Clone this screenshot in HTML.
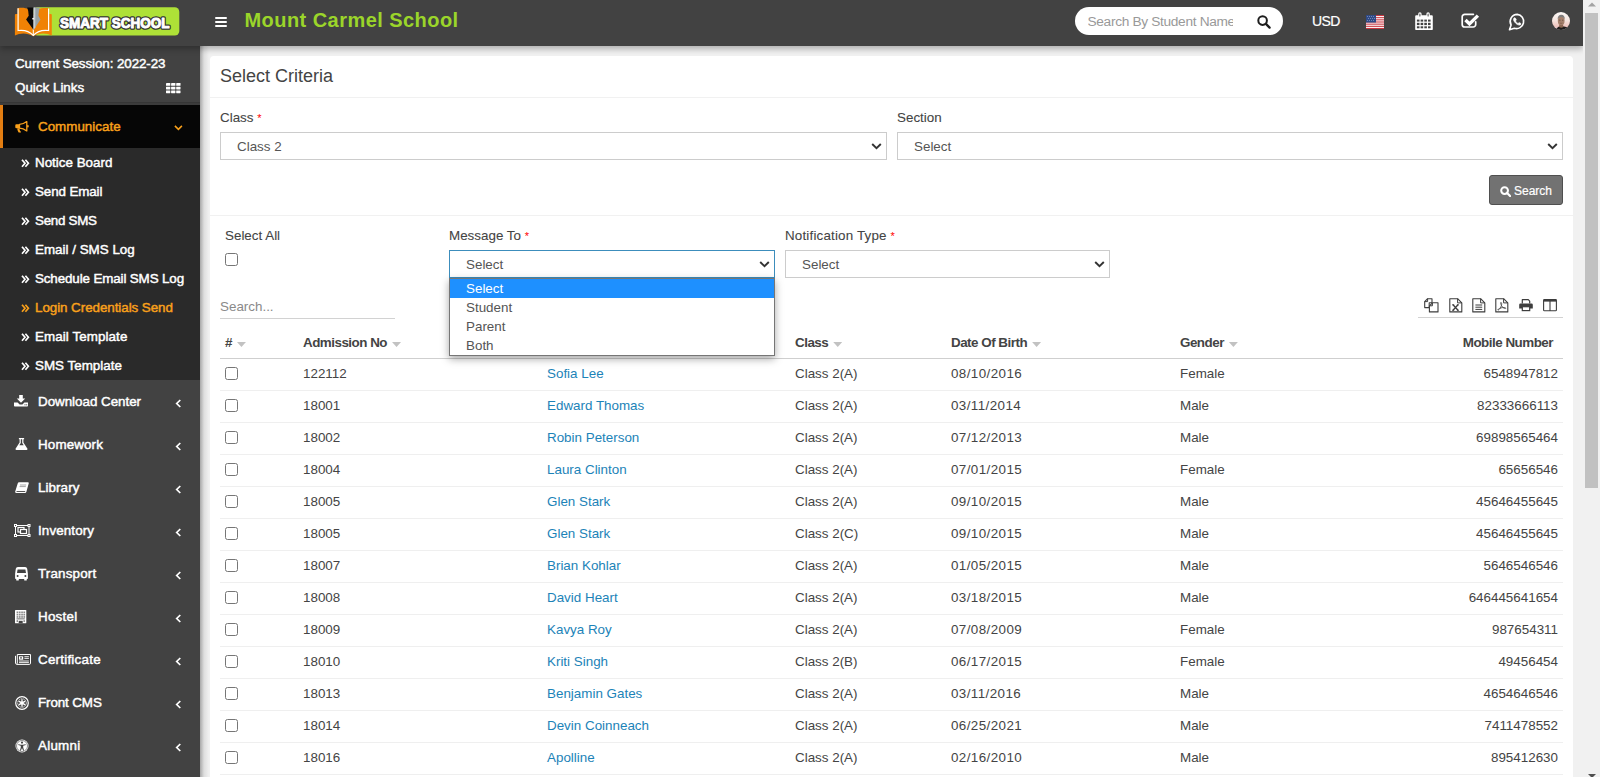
<!DOCTYPE html>
<html lang="en">
<head>
<meta charset="utf-8">
<title>Smart School : Login Credentials Send</title>
<style>
*{box-sizing:border-box;margin:0;padding:0}
html,body{width:1600px;height:777px;overflow:hidden}
body{font-family:"Liberation Sans",Arial,sans-serif;font-size:13.33px;color:#444;background:#f1f1f1;position:relative}
.abs{position:absolute}
svg{display:block}
/* ---------- top navbar ---------- */
#nav{position:absolute;left:0;top:0;width:1583px;height:46px;background:#424242;z-index:30;box-shadow:0 3px 6px rgba(0,0,0,.28)}
#logo{position:absolute;left:14px;top:5.5px}
#burger{position:absolute;left:214.500px;top:17.300px;width:12.500px;height:11px}
#burger i{display:block;height:2px;background:#fff;margin-bottom:2px;border-radius:1px}
#school{position:absolute;left:244.500px;top:8px;font-size:20px;font-weight:bold;color:#9bd52a;letter-spacing:.45px;line-height:24px;white-space:nowrap}
#searchpill{position:absolute;left:1075px;top:7px;width:208px;height:28px;border-radius:14px;background:#fff}
#searchpill span{position:absolute;left:12.500px;top:0;line-height:29px;font-size:13.700px;letter-spacing:-.32px;color:#999;width:145.500px;overflow:hidden;white-space:nowrap}
#usd{position:absolute;left:1312px;top:11px;color:#fff;font-size:14px;letter-spacing:-.6px;line-height:20px;-webkit-text-stroke:.2px #fff}
/* ---------- sidebar ---------- */
#side{position:absolute;left:0;top:46px;width:200px;height:731px;background:#424242;z-index:20;color:#fff}
#side .t{position:absolute;left:15px;font-size:13.4px;line-height:20px;white-space:nowrap;-webkit-text-stroke:.45px currentColor}
#comm{position:absolute;left:0;top:59px;width:200px;height:43px;background:#060606;border-left:3px solid #e27d12}
#sub{position:absolute;left:0;top:102px;width:200px;height:232px;background:#2a2a2a;border-left:3px solid #2a2a2a}
.sub{position:absolute;left:35px;font-size:13.4px;line-height:20px;white-space:nowrap;-webkit-text-stroke:.45px currentColor}
.main{position:absolute;left:38px;font-size:13.4px;line-height:20px;white-space:nowrap;-webkit-text-stroke:.45px currentColor}
.or{color:#f9a01b}
/* ---------- content ---------- */
#shl{position:absolute;left:200px;top:46px;width:9px;height:731px;background:linear-gradient(to right,rgba(0,0,0,.30),rgba(0,0,0,.08) 45%,rgba(0,0,0,0));z-index:5}
#box{position:absolute;left:210px;top:56px;width:1363px;height:740px;background:#fff;border-radius:4px 4px 0 0}
.lbl{position:absolute;font-size:13.4px;line-height:20px;color:#444;white-space:nowrap;-webkit-text-stroke:.08px currentColor}
.req{color:#f00;font-size:11px;-webkit-text-stroke:0}
.sel{position:absolute;height:28px;border:1px solid #ccc;background:#fff;font-size:13.4px;color:#555;line-height:27px;padding-left:16px;white-space:nowrap;border-radius:0}
.sel svg{position:absolute;right:4px;top:10px}
.hr{position:absolute;height:1px;background:#f1f1f1}
table{position:absolute;left:220px;top:326px;width:1343px;border-collapse:separate;border-spacing:0;table-layout:fixed}
th{height:33px;text-align:left;font-weight:bold;font-size:13.4px;letter-spacing:-.5px;color:#444;padding:0 5px;border-bottom:1px solid #cfcfcf;white-space:nowrap;line-height:30px;vertical-align:middle;padding-top:2px}
td{height:32px;font-size:13.4px;color:#444;padding:0 5px;border-bottom:1px solid #efefef;white-space:nowrap;line-height:29px;vertical-align:middle;padding-bottom:2px}
td a{color:#1c83b8;text-decoration:none}
.r{text-align:right}
td.d{letter-spacing:.42px}
.cb{display:block;width:13px;height:13px;border:1px solid #767676;border-radius:2.5px;background:#fff}
.car{display:inline-block;width:9px;height:5px;margin-left:5px;vertical-align:0;background:#c2c2c2;clip-path:polygon(0 0,100% 0,50% 100%)}
#sbtn{position:absolute;left:1489px;top:175px;width:74px;height:30px;background:#727272;border:1px solid #4f4f4f;border-radius:3px;color:#fff;font-size:12px;line-height:30px;white-space:nowrap}
#sbtn svg{position:absolute;left:10px;top:9.700px}
#sbtn span{position:absolute;left:24px;top:0;-webkit-text-stroke:.2px #fff}
/* dropdown */
#dd{position:absolute;left:449px;top:278px;width:326px;height:78px;background:#fff;border:1px solid #767676;box-shadow:0 3px 8px rgba(0,0,0,.35);z-index:10}
#dd div{height:19px;line-height:19px;font-size:13.4px;padding-left:16px;color:#555}
#dd div.on{background:#1e90ff;color:#fff}
/* scrollbar */
#sb{position:absolute;left:1583px;top:0;width:17px;height:777px;background:#f1f1f1;z-index:40}
#sb b{position:absolute;left:2px;top:13px;width:13px;height:475px;background:#c1c1c1}
</style>
</head>
<body>

<!-- NAVBAR -->
<div id="nav">
  <svg id="logo" width="168" height="31" viewBox="0 0 168 31">
    <rect x="19" y="1.200" width="146.300" height="28.400" rx="4.500" fill="#aee137"/>
    <path d="M.9 8.900Q.9 8 1.800 8L3.500 8L3.500 2.200C8 1.500 12 1.900 14.500 3.400L19.300 8L19.300 30.200C13 26.300 6 26.900.9 29.400Z" fill="#f08205"/>
    <path d="M37.800 8.900Q37.800 8 36.900 8L35.200 8L35.200 2.400C31 1.700 27 2.100 24.500 3.500L19.300 8L19.300 30.200C25.600 26.300 32.600 26.900 37.800 29.400Z" fill="#f08205"/>
    <path d="M4.100 2.300L4.100 24.500C10 23.700 15.500 25.300 19.300 29.400C23.100 25.300 28.600 23.700 34.600 24.500L34.600 2.500" fill="none" stroke="#fff" stroke-width="1.200"/>
    <path d="M19.300 9L19.300 29.600" stroke="#fff" stroke-width="1"/>
    <path d="M13.200 1.500L19.600 1.500L19.600 23.900L12.100 13.600L14.700 9.800L14.200 5Z" fill="#0a0a0a"/>
    <path d="M19.600 1.500L25.800 1.500L25 5L24.400 9.800L26.500 13.600L19.600 23.900Z" fill="#98a2a5"/>
    <path d="M19.600 1.500L21.300 1.500L21.300 21.300L19.600 23.900Z" fill="#c9d0d2"/>
    <circle cx="19.100" cy="12.700" r="0.900" fill="#fff"/>
    <text x="100.700" y="21.500" text-anchor="middle" font-family="'Liberation Sans',Arial,sans-serif" font-weight="bold" font-size="14.800" textLength="109.500" lengthAdjust="spacingAndGlyphs" fill="#333" stroke="#333" stroke-width="3.600" stroke-linejoin="round">SMART SCHOOL</text>
    <text x="100.700" y="21.500" text-anchor="middle" font-family="'Liberation Sans',Arial,sans-serif" font-weight="bold" font-size="14.800" textLength="109.500" lengthAdjust="spacingAndGlyphs" fill="#fff" stroke="#fff" stroke-width="1" stroke-linejoin="round">SMART SCHOOL</text>
  </svg>
  <div id="burger"><i></i><i></i><i></i></div>
  <div id="school">Mount Carmel School</div>
  <div id="searchpill"><span>Search By Student Name Or Roll</span></div>
  <svg class="abs" style="left:1257px;top:15px" width="14" height="14" viewBox="0 0 14 14"><circle cx="5.6" cy="5.6" r="4.3" fill="none" stroke="#1d1d1d" stroke-width="2"/><path d="M8.9 8.9L12.6 12.6" stroke="#1d1d1d" stroke-width="2.3" stroke-linecap="round"/></svg>
  <div id="usd">USD</div>
  <!-- flag -->
  <svg class="abs" style="left:1366px;top:15px" width="18" height="14" viewBox="0 0 18 14"><rect width="18" height="14" fill="#fff"/><g fill="#c9353f"><rect y="0" width="18" height="1.08"/><rect y="2.15" width="18" height="1.08"/><rect y="4.3" width="18" height="1.08"/><rect y="6.46" width="18" height="1.08"/><rect y="8.6" width="18" height="1.08"/><rect y="10.77" width="18" height="1.08"/><rect y="12.92" width="18" height="1.08"/></g><rect width="10" height="7.54" fill="#2f4a85"/><g fill="#7386b5"><rect x="1" y="1" width="1" height="1"/><rect x="3" y="1" width="1" height="1"/><rect x="5" y="1" width="1" height="1"/><rect x="7" y="1" width="1" height="1"/><rect x="2" y="3" width="1" height="1"/><rect x="4" y="3" width="1" height="1"/><rect x="6" y="3" width="1" height="1"/><rect x="8" y="3" width="1" height="1"/><rect x="1" y="5" width="1" height="1"/><rect x="3" y="5" width="1" height="1"/><rect x="5" y="5" width="1" height="1"/><rect x="7" y="5" width="1" height="1"/></g></svg>
  <!-- calendar -->
  <svg class="abs" style="left:1415px;top:11.5px" width="18" height="18.5" viewBox="0 0 18 18.5"><path d="M1.2 3.2h15.6a1 1 0 0 1 1 1V17a1.2 1.2 0 0 1-1.2 1.2H1.4A1.2 1.2 0 0 1 .2 17V4.2a1 1 0 0 1 1-1z" fill="#fff"/><rect x="3.2" y="0.3" width="3.4" height="5.2" rx="1.7" fill="#fff"/><rect x="11.4" y="0.3" width="3.4" height="5.2" rx="1.7" fill="#fff"/><rect x="4.4" y="1.4" width="1" height="3" rx=".5" fill="#424242"/><rect x="12.6" y="1.4" width="1" height="3" rx=".5" fill="#424242"/><g fill="#424242"><rect x="1.9" y="7.6" width="2.6" height="2"/><rect x="5.6" y="7.6" width="2.6" height="2"/><rect x="9.3" y="7.6" width="2.6" height="2"/><rect x="13" y="7.6" width="2.6" height="2"/><rect x="1.9" y="10.8" width="2.6" height="2.3"/><rect x="5.6" y="10.8" width="2.6" height="2.3"/><rect x="9.3" y="10.8" width="2.6" height="2.3"/><rect x="13" y="10.8" width="2.6" height="2.3"/><rect x="1.9" y="14.3" width="2.6" height="2"/><rect x="5.6" y="14.3" width="2.6" height="2"/><rect x="9.3" y="14.3" width="2.6" height="2"/><rect x="13" y="14.3" width="2.6" height="2"/></g></svg>
  <!-- check-square -->
  <svg class="abs" style="left:1461px;top:13px" width="19" height="16" viewBox="0 0 19 16"><path d="M12.400 1.300H3.700a2.500 2.500 0 0 0-2.500 2.500V11.500A2.500 2.500 0 0 0 3.700 14H12.200A2.500 2.500 0 0 0 14.700 11.500V8.800" fill="none" stroke="#fff" stroke-width="1.700" stroke-linecap="round"/><path d="M4.500 7L8.500 11L16.900 2.600" fill="none" stroke="#fff" stroke-width="3.300" stroke-linejoin="miter"/></svg>
  <!-- whatsapp -->
  <svg class="abs" style="left:1507.500px;top:12.500px" width="18" height="18" viewBox="0 0 18 18"><path d="M9.300 1.400A7.100 7.100 0 0 0 3.100 12L1.500 16.700L6.300 15.200A7.100 7.100 0 1 0 9.300 1.400Z" fill="none" stroke="#fff" stroke-width="1.600" stroke-linejoin="round"/><path d="M6.900 4.800c-.5-.3-1.300.5-1.400 1.300c-.2 2.300 3.300 6.100 6 6c.9 0 1.700-.8 1.500-1.400c-.2-.4-1.300-1-1.800-1.100c-.5 0-.7.800-1.100.8c-.8-.1-2.300-1.600-2.500-2.500c0-.4.700-.7.700-1.200c-.1-.5-.7-1.600-1.400-1.900z" fill="#fff" stroke="#fff" stroke-width=".6" stroke-linejoin="round"/></svg>
  <!-- avatar -->
  <svg class="abs" style="left:1552px;top:12px" width="18" height="18" viewBox="0 0 18 18"><linearGradient id="avg" x1="0" y1="0" x2="0" y2="1"><stop offset="0" stop-color="#fbf8f6"/><stop offset=".45" stop-color="#f6e6e0"/><stop offset=".8" stop-color="#efc3bd"/><stop offset="1" stop-color="#c9c6d8"/></linearGradient><clipPath id="avc"><circle cx="9" cy="9" r="9"/></clipPath><g clip-path="url(#avc)"><rect width="18" height="18" fill="url(#avg)"/><path d="M4.500 18c.2-2.300 1.800-3.500 4.300-3.900l4.500.6c2 .5 3.300 1.600 3.700 3.300z" fill="#1f1c1a"/><path d="M7.300 12.500h3.700l.4 2.600c-1.400.8-3 .7-4.300-.2z" fill="#8a6450"/><ellipse cx="9.200" cy="8.700" rx="3.400" ry="4.500" fill="#a47f6b"/><path d="M5.700 7.600c-.3-3.200 1.400-4.900 3.600-4.900s3.800 1.600 3.400 4.800c-.5-1.500-1.300-2.400-3.500-2.400s-3 .9-3.500 2.500z" fill="#7f7d7c"/><path d="M7.200 8.200h1.300M10 8.200h1.300" stroke="#5c4438" stroke-width=".7"/><path d="M8 11.100c.8.400 1.600.4 2.400 0" stroke="#7a5646" stroke-width=".6" fill="none"/></g></svg>
</div>

<!-- SIDEBAR -->
<div id="side">
  <div class="t" style="top:8px;letter-spacing:-.09px">Current Session: 2022-23</div>
  <div class="t" style="top:32px">Quick Links</div>
  <div class="abs" style="left:0;top:56px;width:200px;height:1px;background:#363636"></div><div class="abs" style="left:0;top:57px;width:200px;height:2px;background:#3c3c3c"></div>
  <div id="comm"><svg class="abs" style="left:11.500px;top:15.800px" width="15" height="12" viewBox="0 0 15 12"><path d="M.3 4.300a1 1 0 0 1 1-1h3.200v3.900H1.300a1 1 0 0 1-1-1z" fill="#f9a01b"/><path d="M4.500 3.300C7.500 3.300 10 2 11.800.6V9.900C10 8.500 7.500 7.200 4.500 7.200z" fill="none" stroke="#f9a01b" stroke-width="1.300" stroke-linejoin="round"/><rect x="12" y="3.900" width="1.700" height="2.700" rx=".8" fill="#f9a01b"/><path d="M2.300 7.200h2.300c-.2 1.400.3 2.600 1.300 3.600v.6H3.700c-.9-1.100-1.400-2.600-1.400-4.200z" fill="#f9a01b"/></svg><svg class="abs" style="left:170.500px;top:19.800px" width="9" height="6" viewBox="0 0 9 6"><path d="M.9.900L4.400 4.400L7.900.9" fill="none" stroke="#f9a01b" stroke-width="1.500"/></svg><span class="main or" style="left:35px;top:12px">Communicate</span></div>
  <div id="sub"><svg class="abs" style="left:17.500px;top:10.5px" width="9" height="9" viewBox="0 0 9 9"><path d="M1 .8L4 4.300L1 7.800M4.400.8L7.400 4.300L4.400 7.800" fill="none" stroke="#fff" stroke-width="1.700"/></svg><svg class="abs" style="left:17.500px;top:39.5px" width="9" height="9" viewBox="0 0 9 9"><path d="M1 .8L4 4.300L1 7.800M4.400.8L7.400 4.300L4.400 7.800" fill="none" stroke="#fff" stroke-width="1.700"/></svg><svg class="abs" style="left:17.500px;top:68.5px" width="9" height="9" viewBox="0 0 9 9"><path d="M1 .8L4 4.300L1 7.800M4.400.8L7.400 4.300L4.400 7.800" fill="none" stroke="#fff" stroke-width="1.700"/></svg><svg class="abs" style="left:17.500px;top:97.5px" width="9" height="9" viewBox="0 0 9 9"><path d="M1 .8L4 4.300L1 7.800M4.400.8L7.400 4.300L4.400 7.800" fill="none" stroke="#fff" stroke-width="1.700"/></svg><svg class="abs" style="left:17.500px;top:126.5px" width="9" height="9" viewBox="0 0 9 9"><path d="M1 .8L4 4.300L1 7.800M4.400.8L7.400 4.300L4.400 7.800" fill="none" stroke="#fff" stroke-width="1.700"/></svg><svg class="abs" style="left:17.500px;top:155.5px" width="9" height="9" viewBox="0 0 9 9"><path d="M1 .8L4 4.300L1 7.800M4.400.8L7.400 4.300L4.400 7.800" fill="none" stroke="#f9a01b" stroke-width="1.700"/></svg><svg class="abs" style="left:17.500px;top:184.5px" width="9" height="9" viewBox="0 0 9 9"><path d="M1 .8L4 4.300L1 7.800M4.400.8L7.400 4.300L4.400 7.800" fill="none" stroke="#fff" stroke-width="1.700"/></svg><svg class="abs" style="left:17.500px;top:213.5px" width="9" height="9" viewBox="0 0 9 9"><path d="M1 .8L4 4.300L1 7.800M4.400.8L7.400 4.300L4.400 7.800" fill="none" stroke="#fff" stroke-width="1.700"/></svg>
    <span class="sub" style="left:32px;top:5px">Notice Board</span>
    <span class="sub" style="left:32px;top:34px;letter-spacing:-0.12px">Send Email</span>
    <span class="sub" style="left:32px;top:63px;letter-spacing:-0.29px">Send SMS</span>
    <span class="sub" style="left:32px;top:92px">Email / SMS Log</span>
    <span class="sub" style="left:32px;top:121px;letter-spacing:-0.13px">Schedule Email SMS Log</span>
    <span class="sub or" style="left:32px;top:150px;letter-spacing:-0.06px">Login Credentials Send</span>
    <span class="sub" style="left:32px;top:179px;letter-spacing:0.08px">Email Template</span>
    <span class="sub" style="left:32px;top:208px">SMS Template</span>
  </div>
  <svg class="abs" style="left:166px;top:37px" width="15" height="11" viewBox="0 0 15 11"><g fill="#fff"><rect x="0" y="0" width="4.300" height="2.800" rx=".4"/><rect x="5.100" y="0" width="4.300" height="2.800" rx=".4"/><rect x="10.200" y="0" width="4.300" height="2.800" rx=".4"/><rect x="0" y="3.700" width="4.300" height="2.800" rx=".4"/><rect x="5.100" y="3.700" width="4.300" height="2.800" rx=".4"/><rect x="10.200" y="3.700" width="4.300" height="2.800" rx=".4"/><rect x="0" y="7.400" width="4.300" height="2.800" rx=".4"/><rect x="5.100" y="7.400" width="4.300" height="2.800" rx=".4"/><rect x="10.200" y="7.400" width="4.300" height="2.800" rx=".4"/></g></svg>
  <svg class="abs" style="left:14.300px;top:348.500px" width="14" height="12" viewBox="0 0 14 12"><path d="M5.200 0h3.600v3.600h2.400L7 7.800L2.800 3.600h2.400z" fill="#fff"/><path d="M0 7.400h3.600l2 2h2.800l2-2H14v3.400a.8.800 0 0 1-.8.800H.8a.8.800 0 0 1-.8-.8z" fill="#fff"/><rect x="10.500" y="9.300" width="1" height="1" fill="#424242"/><rect x="12.200" y="9.300" width="1" height="1" fill="#424242"/></svg>
  <svg class="abs" style="left:15px;top:392.200px" width="13" height="12" viewBox="0 0 13 12"><path d="M3.900 0h5.200v1.200h-.7v3.300l3.900 5.900a1 1 0 0 1-.9 1.600H1.600a1 1 0 0 1-.9-1.600l3.900-5.900V1.200h-.7z" fill="#fff"/><path d="M5.800 1.200h1.400v3.700l1.500 2.300H4.300l1.500-2.300z" fill="#424242"/></svg>
  <svg class="abs" style="left:14.500px;top:435.500px" width="14" height="12" viewBox="0 0 14 12"><path d="M4.200.3h8.600a.9.900 0 0 1 .9 1.200l-2.300 8.200a1.600 1.600 0 0 1-1.500 1.200H1.500a1.300 1.300 0 0 1-1.200-1.700L2.700 1.500A1.600 1.600 0 0 1 4.200.3z" fill="#fff"/><path d="M5 3h6.200M4.600 4.600h6.200" stroke="#9a9a9a" stroke-width=".9"/><path d="M1.500 9.500h8.700" stroke="#424242" stroke-width=".9"/></svg>
  <svg class="abs" style="left:14px;top:478px" width="17" height="13" viewBox="0 0 17 13"><rect x="1.500" y="1.500" width="13.500" height="10" fill="none" stroke="#fff" stroke-width="1"/><g fill="#fff"><rect x="0" y="0" width="3" height="3"/><rect x="13.500" y="0" width="3" height="3"/><rect x="0" y="10" width="3" height="3"/><rect x="13.500" y="10" width="3" height="3"/></g><g fill="#424242"><rect x="1" y="1" width="1" height="1"/><rect x="14.500" y="1" width="1" height="1"/><rect x="1" y="11" width="1" height="1"/><rect x="14.500" y="11" width="1" height="1"/></g><rect x="4" y="3.500" width="6" height="4.500" fill="none" stroke="#fff" stroke-width="1.200"/><rect x="6.500" y="5.500" width="6" height="4" fill="#424242" stroke="#fff" stroke-width="1.200"/></svg>
  <svg class="abs" style="left:14.500px;top:520.800px" width="13" height="14" viewBox="0 0 13 14"><path d="M3 0h7a2.200 2.200 0 0 1 2.200 1.800l.7 5v4.400a.7.700 0 0 1-.7.700H.8a.7.700 0 0 1-.7-.7V6.800l.7-5A2.200 2.200 0 0 1 3 0z" fill="#fff"/><rect x="1.200" y="11" width="2.600" height="2.600" rx=".6" fill="#fff"/><rect x="9.200" y="11" width="2.600" height="2.600" rx=".6" fill="#fff"/><path d="M2.600 2.500h7.800l.6 3.600H2z" fill="#424242"/><circle cx="2.600" cy="9" r="1" fill="#424242"/><circle cx="10.400" cy="9" r="1" fill="#424242"/></svg>
  <svg class="abs" style="left:14.700px;top:563.600px" width="12" height="14" viewBox="0 0 12 14"><rect x="0" y="0" width="11.300" height="13.300" rx=".6" fill="#fff"/><g fill="#8b8b8b"><rect x="1.600" y="1.500" width="1.700" height="1.700"/><rect x="3.900" y="1.500" width="1.700" height="1.700"/><rect x="6.200" y="1.500" width="1.700" height="1.700"/><rect x="8.400" y="1.500" width="1.700" height="1.700"/><rect x="1.600" y="3.800" width="1.700" height="1.700"/><rect x="3.900" y="3.800" width="1.700" height="1.700"/><rect x="6.200" y="3.800" width="1.700" height="1.700"/><rect x="8.400" y="3.800" width="1.700" height="1.700"/><rect x="1.600" y="6.100" width="1.700" height="1.700"/><rect x="3.900" y="6.100" width="1.700" height="1.700"/><rect x="6.200" y="6.100" width="1.700" height="1.700"/><rect x="8.400" y="6.100" width="1.700" height="1.700"/></g><rect x="1.500" y="8.500" width="8.300" height=".8" fill="#424242"/><rect x="3.700" y="10.800" width="4" height="2.500" fill="#424242"/><rect x="1.600" y="10.400" width="1.300" height="1.300" fill="#424242"/><rect x="8.500" y="10.400" width="1.300" height="1.300" fill="#424242"/></svg>
  <svg class="abs" style="left:14.500px;top:607.500px" width="16" height="11" viewBox="0 0 16 11"><path d="M.5 1.800V9.200a.9.900 0 0 0 1.800 0V.5h13.200v8.700a1.200 1.200 0 0 1-1.200 1.200H1.600" fill="none" stroke="#fff" stroke-width="1"/><rect x="4" y="2.300" width="4.200" height="3.400" fill="#fff"/><rect x="5.200" y="3.200" width="1.600" height="1.400" fill="#424242"/><path d="M9.400 2.700h4.500M9.400 4.400h4.500M4 7h9.900M4 8.600h9.900" stroke="#fff" stroke-width=".9"/></svg>
  <svg class="abs" style="left:14.500px;top:649.500px" width="14" height="14" viewBox="0 0 14 14"><circle cx="7" cy="7" r="6.300" fill="none" stroke="#fff" stroke-width="1.200"/><circle cx="7" cy="7" r="4.300" fill="none" stroke="#fff" stroke-width=".7" stroke-dasharray="1.800 .5"/><path d="M7 3.200V10.800M3.700 5.100L10.300 8.900M10.300 5.100L3.700 8.900" stroke="#fff" stroke-width="1.300"/><circle cx="7" cy="7" r="1.500" fill="#fff"/></svg>
  <svg class="abs" style="left:14.500px;top:692.500px" width="14" height="14" viewBox="0 0 14 14"><circle cx="7" cy="7" r="6.500" fill="#fff"/><circle cx="7" cy="7" r="5.500" fill="none" stroke="#424242" stroke-width=".6"/><circle cx="7" cy="3.600" r="1.050" fill="#424242"/><path d="M3.400 5.200l2.600.5h2l2.600-.5.200.9-2.600.7v1.600l.9 3.100-.9.300L7 9.100 5.800 11.800l-.9-.3.900-3.100V6.800L3.200 6.100z" fill="#424242"/></svg>
  <svg class="abs" style="left:174.500px;top:352.5px" width="7" height="9" viewBox="0 0 7 9"><path d="M5.300 1L1.700 4.500L5.300 8" fill="none" stroke="#fff" stroke-width="1.700" stroke-linecap="butt" stroke-linejoin="miter"/></svg>
  <svg class="abs" style="left:174.500px;top:395.5px" width="7" height="9" viewBox="0 0 7 9"><path d="M5.300 1L1.700 4.500L5.300 8" fill="none" stroke="#fff" stroke-width="1.700" stroke-linecap="butt" stroke-linejoin="miter"/></svg>
  <svg class="abs" style="left:174.500px;top:438.5px" width="7" height="9" viewBox="0 0 7 9"><path d="M5.300 1L1.700 4.500L5.300 8" fill="none" stroke="#fff" stroke-width="1.700" stroke-linecap="butt" stroke-linejoin="miter"/></svg>
  <svg class="abs" style="left:174.500px;top:481.5px" width="7" height="9" viewBox="0 0 7 9"><path d="M5.300 1L1.700 4.500L5.300 8" fill="none" stroke="#fff" stroke-width="1.700" stroke-linecap="butt" stroke-linejoin="miter"/></svg>
  <svg class="abs" style="left:174.500px;top:524.5px" width="7" height="9" viewBox="0 0 7 9"><path d="M5.300 1L1.700 4.500L5.300 8" fill="none" stroke="#fff" stroke-width="1.700" stroke-linecap="butt" stroke-linejoin="miter"/></svg>
  <svg class="abs" style="left:174.500px;top:567.5px" width="7" height="9" viewBox="0 0 7 9"><path d="M5.300 1L1.700 4.500L5.300 8" fill="none" stroke="#fff" stroke-width="1.700" stroke-linecap="butt" stroke-linejoin="miter"/></svg>
  <svg class="abs" style="left:174.500px;top:610.5px" width="7" height="9" viewBox="0 0 7 9"><path d="M5.300 1L1.700 4.500L5.300 8" fill="none" stroke="#fff" stroke-width="1.700" stroke-linecap="butt" stroke-linejoin="miter"/></svg>
  <svg class="abs" style="left:174.500px;top:653.5px" width="7" height="9" viewBox="0 0 7 9"><path d="M5.300 1L1.700 4.500L5.300 8" fill="none" stroke="#fff" stroke-width="1.700" stroke-linecap="butt" stroke-linejoin="miter"/></svg>
  <svg class="abs" style="left:174.500px;top:696.5px" width="7" height="9" viewBox="0 0 7 9"><path d="M5.300 1L1.700 4.500L5.300 8" fill="none" stroke="#fff" stroke-width="1.700" stroke-linecap="butt" stroke-linejoin="miter"/></svg>
  <span class="main" style="top:346px;letter-spacing:-0.03px">Download Center</span>
  <span class="main" style="top:389px;letter-spacing:0.13px">Homework</span>
  <span class="main" style="top:432px;letter-spacing:0.07px">Library</span>
  <span class="main" style="top:475px;letter-spacing:0.11px">Inventory</span>
  <span class="main" style="top:518px;letter-spacing:0.17px">Transport</span>
  <span class="main" style="top:561px;letter-spacing:0.25px">Hostel</span>
  <span class="main" style="top:604px;letter-spacing:0.23px">Certificate</span>
  <span class="main" style="top:647px;letter-spacing:-0.11px">Front CMS</span>
  <span class="main" style="top:690px;letter-spacing:0.25px">Alumni</span>
</div>

<!-- CONTENT -->
<div id="shl"></div>
<div id="box"></div>
<div class="abs" style="left:220px;top:63px;font-size:18px;line-height:26px;color:#444">Select Criteria</div>
<div class="hr" style="left:210px;top:97px;width:1363px"></div>

<div class="lbl" style="left:220px;top:108px">Class <span class="req">*</span></div>
<div class="sel" style="left:220px;top:132px;width:667px">Class 2<svg width="11" height="7" viewBox="0 0 11 7"><path d="M1.200 1L5.500 5.200L9.800 1" fill="none" stroke="#333" stroke-width="1.900"/></svg></div>
<div class="lbl" style="left:897px;top:108px">Section</div>
<div class="sel" style="left:897px;top:132px;width:666px">Select<svg width="11" height="7" viewBox="0 0 11 7"><path d="M1.200 1L5.500 5.200L9.800 1" fill="none" stroke="#333" stroke-width="1.900"/></svg></div>

<div class="hr" style="left:210px;top:215px;width:1363px"></div>

<div class="lbl" style="left:225px;top:226px">Select All</div>
<i class="cb abs" style="left:225px;top:253px"></i>
<div class="lbl" style="left:449px;top:226px">Message To <span class="req">*</span></div>
<div class="sel" style="left:449px;top:250px;width:326px;border-color:#3c8dbc">Select<svg width="11" height="7" viewBox="0 0 11 7"><path d="M1.200 1L5.500 5.200L9.800 1" fill="none" stroke="#333" stroke-width="1.900"/></svg></div>
<div class="lbl" style="left:785px;top:226px;letter-spacing:.17px">Notification Type <span class="req">*</span></div>
<div class="sel" style="left:785px;top:250px;width:325px">Select<svg width="11" height="7" viewBox="0 0 11 7"><path d="M1.200 1L5.500 5.200L9.800 1" fill="none" stroke="#333" stroke-width="1.900"/></svg></div>

<!-- SEARCH BUTTON -->
<div id="sbtn"><svg width="11" height="11" viewBox="0 0 12 12"><circle cx="5" cy="5" r="3.700" fill="none" stroke="#fff" stroke-width="2.200"/><path d="M7.700 7.700L11 11" stroke="#fff" stroke-width="2.400" stroke-linecap="round"/></svg><span>Search</span></div>
<!-- TABLE TOOLS -->
<div class="abs" style="left:220px;top:297px;font-size:13.4px;line-height:20px;color:#8a8a8a">Search...</div>
<div class="abs" style="left:220px;top:318px;width:175px;height:1px;background:#d2d2d2"></div>
<div class="abs" style="left:1418px;top:317px;width:145px;height:1px;background:#d2d2d2"></div>
<div id="tools">
<svg class="abs" style="left:1423.500px;top:297.500px" width="15" height="15" viewBox="0 0 15 15"><path d="M3.600.7H8V4.800H5.200V9.600H.7V3.600Z" fill="#fff" stroke="#3d3d3d" stroke-width="1.100" stroke-linejoin="round"/><path d="M3.600.7V3.600H.7" fill="none" stroke="#3d3d3d" stroke-width="1"/><path d="M8.400 4.800H14V13.900H5.400V7.800Z" fill="#fff" stroke="#3d3d3d" stroke-width="1.100" stroke-linejoin="round"/><path d="M8.400 4.800V7.800H5.400" fill="none" stroke="#3d3d3d" stroke-width="1"/></svg>
<svg class="abs" style="left:1448.500px;top:297.500px" width="14" height="15" viewBox="0 0 14 15"><path d="M.8.700H8.600L12.800 4.900V13.900H.8Z" fill="none" stroke="#3d3d3d" stroke-width="1.100" stroke-linejoin="round"/><path d="M8.600.7V4.900H12.800" fill="none" stroke="#3d3d3d" stroke-width="1"/><path d="M4 6.800L9 12.300M9 6.800L4 12.300" stroke="#3d3d3d" stroke-width="1.300"/><path d="M3 6.800H5.200M7.900 6.800H10M3 12.300H5.200M7.900 12.300H10" stroke="#3d3d3d" stroke-width=".9"/></svg>
<svg class="abs" style="left:1472.200px;top:297.500px" width="14" height="15" viewBox="0 0 14 15"><path d="M.8.700H8.600L12.800 4.900V13.900H.8Z" fill="none" stroke="#3d3d3d" stroke-width="1.100" stroke-linejoin="round"/><path d="M8.600.7V4.900H12.800" fill="none" stroke="#3d3d3d" stroke-width="1"/><path d="M3.400 7H10.200M3.400 9.200H10.200M3.400 11.400H10.200" stroke="#3d3d3d" stroke-width="1"/></svg>
<svg class="abs" style="left:1495.400px;top:297.500px" width="14" height="15" viewBox="0 0 14 15"><path d="M.8.700H8.600L12.800 4.900V13.900H.8Z" fill="none" stroke="#3d3d3d" stroke-width="1.100" stroke-linejoin="round"/><path d="M8.600.7V4.900H12.800" fill="none" stroke="#3d3d3d" stroke-width="1"/><path d="M5.800 4.500C6.800 4.300 6.900 6 6.400 7.600C5.800 9.600 4.300 11.800 3.200 12.100C2.300 12.200 3 10.700 6 9.900C8.500 9.300 10.800 9.400 10.800 10.200C10.700 11 8.500 10.300 7.200 8.700C6.200 7.400 5.300 4.900 5.800 4.500Z" fill="none" stroke="#3d3d3d" stroke-width=".8"/></svg>
<svg class="abs" style="left:1518.800px;top:299px" width="14" height="13" viewBox="0 0 14 13"><path d="M3.300 4.500V.7H9.300L10.700 2.100V4.500" fill="#fff" stroke="#3d3d3d" stroke-width="1.200" stroke-linejoin="round"/><path d="M1.500 4.400H12.500A1.300 1.300 0 0 1 13.800 5.700V9.600H.2V5.700A1.300 1.300 0 0 1 1.500 4.400Z" fill="#3d3d3d"/><rect x="3.300" y="7.700" width="7.400" height="3.900" fill="#fff" stroke="#3d3d3d" stroke-width="1.200"/></svg>
<svg class="abs" style="left:1543.300px;top:298.800px" width="14" height="13" viewBox="0 0 14 13"><rect x=".6" y=".6" width="12.800" height="11.200" rx=".8" fill="none" stroke="#3d3d3d" stroke-width="1.100"/><rect x=".6" y=".6" width="12.800" height="2" fill="#3d3d3d"/><path d="M7 2V12" stroke="#3d3d3d" stroke-width="1.100"/></svg>
</div>
<!-- TABLE -->
<table><colgroup><col style="width:78px"><col style="width:244px"><col style="width:248px"><col style="width:156px"><col style="width:229px"><col style="width:200px"><col></colgroup>
<thead><tr><th>#<i class="car"></i></th><th>Admission No<i class="car"></i></th><th>Student Name<i class="car"></i></th><th>Class<i class="car"></i></th><th>Date Of Birth<i class="car"></i></th><th>Gender<i class="car"></i></th><th class="r" style="padding-right:10px">Mobile Number</th></tr></thead>
<tbody>
<tr><td><i class="cb"></i></td><td>122112</td><td><a>Sofia Lee</a></td><td>Class 2(A)</td><td class="d">08/10/2016</td><td>Female</td><td class="r">6548947812</td></tr>
<tr><td><i class="cb"></i></td><td>18001</td><td><a>Edward Thomas</a></td><td>Class 2(A)</td><td class="d">03/11/2014</td><td>Male</td><td class="r">82333666113</td></tr>
<tr><td><i class="cb"></i></td><td>18002</td><td><a>Robin Peterson</a></td><td>Class 2(A)</td><td class="d">07/12/2013</td><td>Male</td><td class="r">69898565464</td></tr>
<tr><td><i class="cb"></i></td><td>18004</td><td><a>Laura Clinton</a></td><td>Class 2(A)</td><td class="d">07/01/2015</td><td>Female</td><td class="r">65656546</td></tr>
<tr><td><i class="cb"></i></td><td>18005</td><td><a>Glen Stark</a></td><td>Class 2(A)</td><td class="d">09/10/2015</td><td>Male</td><td class="r">45646455645</td></tr>
<tr><td><i class="cb"></i></td><td>18005</td><td><a>Glen Stark</a></td><td>Class 2(C)</td><td class="d">09/10/2015</td><td>Male</td><td class="r">45646455645</td></tr>
<tr><td><i class="cb"></i></td><td>18007</td><td><a>Brian Kohlar</a></td><td>Class 2(A)</td><td class="d">01/05/2015</td><td>Male</td><td class="r">5646546546</td></tr>
<tr><td><i class="cb"></i></td><td>18008</td><td><a>David Heart</a></td><td>Class 2(A)</td><td class="d">03/18/2015</td><td>Male</td><td class="r">646445641654</td></tr>
<tr><td><i class="cb"></i></td><td>18009</td><td><a>Kavya Roy</a></td><td>Class 2(A)</td><td class="d">07/08/2009</td><td>Female</td><td class="r">987654311</td></tr>
<tr><td><i class="cb"></i></td><td>18010</td><td><a>Kriti Singh</a></td><td>Class 2(B)</td><td class="d">06/17/2015</td><td>Female</td><td class="r">49456454</td></tr>
<tr><td><i class="cb"></i></td><td>18013</td><td><a>Benjamin Gates</a></td><td>Class 2(A)</td><td class="d">03/11/2016</td><td>Male</td><td class="r">4654646546</td></tr>
<tr><td><i class="cb"></i></td><td>18014</td><td><a>Devin Coinneach</a></td><td>Class 2(A)</td><td class="d">06/25/2021</td><td>Male</td><td class="r">7411478552</td></tr>
<tr><td><i class="cb"></i></td><td>18016</td><td><a>Apolline</a></td><td>Class 2(A)</td><td class="d">02/16/2010</td><td>Male</td><td class="r">895412630</td></tr>
</tbody></table>

<div id="dd"><div class="on">Select</div><div>Student</div><div>Parent</div><div>Both</div></div>

<div id="sb"><b></b><svg class="abs" style="left:5px;top:1.800px" width="8" height="5" viewBox="0 0 8 5"><path d="M0 4.500L4 .5L8 4.500Z" fill="#a3a3a3"/></svg><svg class="abs" style="left:5px;top:772.800px" width="8" height="6" viewBox="0 0 8 6"><path d="M0 1L8 1L4 5Z" fill="#505050"/></svg></div>
</body>
</html>
